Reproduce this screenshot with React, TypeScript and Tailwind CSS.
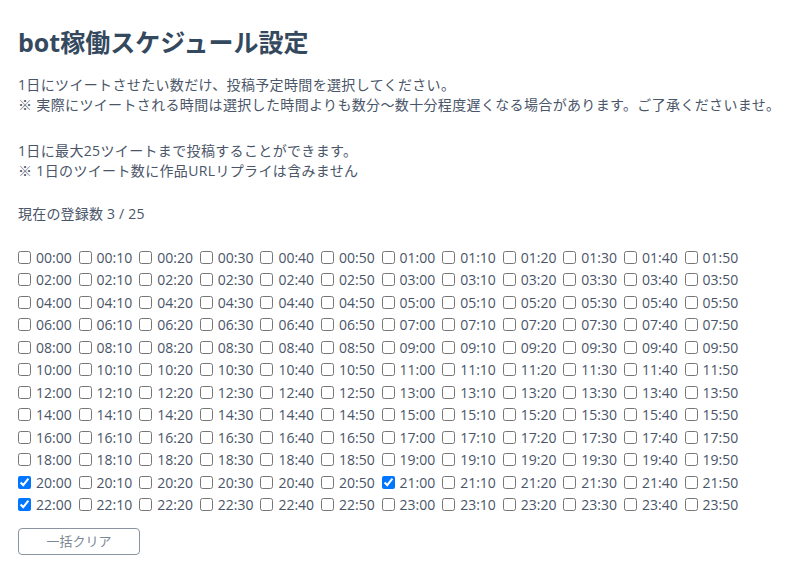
import { useState } from "react";

const times: string[] = [];
for (let h = 0; h < 24; h++) {
  for (let m = 0; m < 60; m += 10) {
    times.push(`${String(h).padStart(2, "0")}:${String(m).padStart(2, "0")}`);
  }
}

const initialChecked = ["20:00", "21:00", "22:00"];

export default function App() {
  const [checked, setChecked] = useState<string[]>(initialChecked);

  const toggle = (t: string) =>
    setChecked((prev) => (prev.includes(t) ? prev.filter((x) => x !== t) : [...prev, t]));

  return (
    <div className="min-h-[569px] bg-white px-[18px] pt-[26px] font-['Open_Sans','Noto_Sans_CJK_JP',sans-serif] text-[#4a5568]">
      <h1 className="text-[25px] font-bold leading-[32px] text-[#35495e]">bot稼働スケジュール設定</h1>

      <p className="mt-[17px] text-[14px] leading-[20px] tracking-[0.35px]">
        1日にツイートさせたい数だけ、投稿予定時間を選択してください。
        <br />
        ※ 実際にツイートされる時間は選択した時間よりも数分〜数十分程度遅くなる場合があります。ご了承くださいませ。
      </p>

      <p className="mt-[26px] text-[14px] leading-[20px] tracking-[0.35px]">
        1日に最大25ツイートまで投稿することができます。
        <br />
        ※ 1日のツイート数に作品URLリプライは含みません
      </p>

      <p className="mt-[23px] text-[14px] leading-[20px] tracking-[0.2px]">現在の登録数 {checked.length} / 25</p>

      <div className="mt-[22px] grid grid-cols-[repeat(12,60.6px)] text-[14px]">
        {times.map((t) => (
          <label key={t} className="flex h-[22.5px] items-center gap-[5px]">
            <input
              type="checkbox"
              className="m-0 h-[13px] w-[13px]"
              checked={checked.includes(t)}
              onChange={() => toggle(t)}
            />
            <span>{t}</span>
          </label>
        ))}
      </div>

      <button
        type="button"
        onClick={() => setChecked([])}
        className="mt-[12px] h-[27px] w-[122px] rounded-[4px] border border-[#8a94a0] bg-white text-[13px] text-[#7b8694]"
      >
        一括クリア
      </button>
    </div>
  );
}
